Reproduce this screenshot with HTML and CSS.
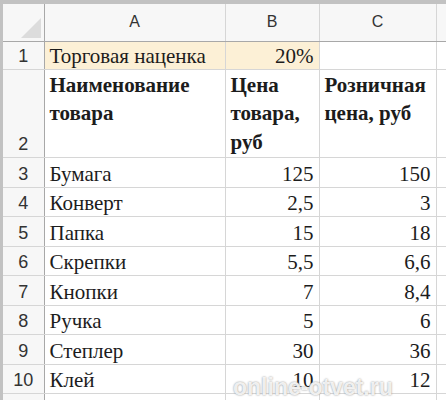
FILE: index.html
```html
<!DOCTYPE html>
<html lang="ru">
<head>
  <meta charset="UTF-8">
  <title>Наценка</title>
  <link rel="stylesheet" href="styles.css">
</head>
<body>
  <table class="sheet">
    <colgroup>
      <col class="w-row"><col class="w-a"><col class="w-b"><col class="w-c"><col class="w-d">
    </colgroup>
    <tr class="h-head">
      <th class="corner"><svg width="22" height="22" viewBox="0 0 22 22"><polygon points="21,1 21,21 1,21" fill="#dcdcdc"/></svg></th>
      <th class="col-head">A</th><th class="col-head">B</th><th class="col-head">C</th><th class="col-head"></th>
    </tr>
    <tr class="h-1">
      <th class="row-head">1</th><td class="fill">Торговая наценка</td><td class="fill num">20%</td><td></td><td></td>
    </tr>
    <tr class="h-2">
      <th class="row-head">2</th><td class="title">Наименование товара</td><td class="title">Цена товара, руб</td><td class="title">Розничная цена, руб</td><td></td>
    </tr>
    <tr><th class="row-head">3</th><td>Бумага</td><td class="num">125</td><td class="num">150</td><td></td></tr>
    <tr><th class="row-head">4</th><td>Конверт</td><td class="num">2,5</td><td class="num">3</td><td></td></tr>
    <tr><th class="row-head">5</th><td>Папка</td><td class="num">15</td><td class="num">18</td><td></td></tr>
    <tr><th class="row-head">6</th><td>Скрепки</td><td class="num">5,5</td><td class="num">6,6</td><td></td></tr>
    <tr><th class="row-head">7</th><td>Кнопки</td><td class="num">7</td><td class="num">8,4</td><td></td></tr>
    <tr><th class="row-head">8</th><td>Ручка</td><td class="num">5</td><td class="num">6</td><td></td></tr>
    <tr><th class="row-head">9</th><td>Степлер</td><td class="num">30</td><td class="num">36</td><td></td></tr>
    <tr><th class="row-head">10</th><td>Клей</td><td class="num">10</td><td class="num">12</td><td></td></tr>
    <tr class="h-tail"><th class="row-head"></th><td></td><td></td><td></td><td></td></tr>
  </table>
  <p class="mark">online-otvet.ru</p>
</body>
</html>
```

FILE: styles.css
```css
/* Sheet: gray frame, header strip, grid lines */
body { margin: 0; padding: 4px 0 0 3px; background: #c2c2c2; height: 396px; overflow: hidden; position: relative; }
.sheet { border-collapse: collapse; table-layout: fixed; width: 444px; background: #fff; }
.w-row { width: 41px; } .w-a { width: 181px; } .w-b { width: 94px; } .w-c { width: 117px; } .w-d { width: 11px; }
th, td { border: 1px solid #d6d6d6; padding: 0 5px 1px 5px; vertical-align: bottom; white-space: nowrap; overflow: hidden; }
td { font-family: "Liberation Serif", "Tinos", "Times New Roman", serif; font-size: 21px; line-height: 24px; color: #1c1c1c; }
th { background: #f7f7f7; font-family: "Liberation Sans", sans-serif; font-weight: normal; color: #333; }
/* Heights */
tr { height: 29.5px; }
.h-head { height: 37px; }
.h-1 { height: 28px; }
.h-2 { height: 88px; }
.h-tail { height: 12px; }
/* Headers */
.corner { border-top: none; border-left: none; border-right: 1px solid #a8a8a8; border-bottom: 1px solid #a8a8a8; padding: 0 2px 2px 0; text-align: right; line-height: 0; }
.col-head { border-top: none; border-bottom: 1px solid #a8a8a8; text-align: center; vertical-align: middle; font-size: 16px; }
.row-head { border-left: none; border-right: 1px solid #a8a8a8; text-align: center; font-size: 18px; line-height: 18px; padding: 0 0 4px 0; }
/* Cells */
.num { text-align: right; }
.fill { background: #fcf0d6; }
.title { vertical-align: top; white-space: normal; font-weight: bold; line-height: 28.5px; padding-top: 1px; }
/* Watermark */
.mark { position: absolute; left: 233px; top: 375px; margin: 0; font-family: "Liberation Sans", sans-serif; font-weight: bold; font-size: 23px; line-height: 25px; color: rgba(255,255,255,0.85); text-shadow: 0 0 2px #888; }
```
